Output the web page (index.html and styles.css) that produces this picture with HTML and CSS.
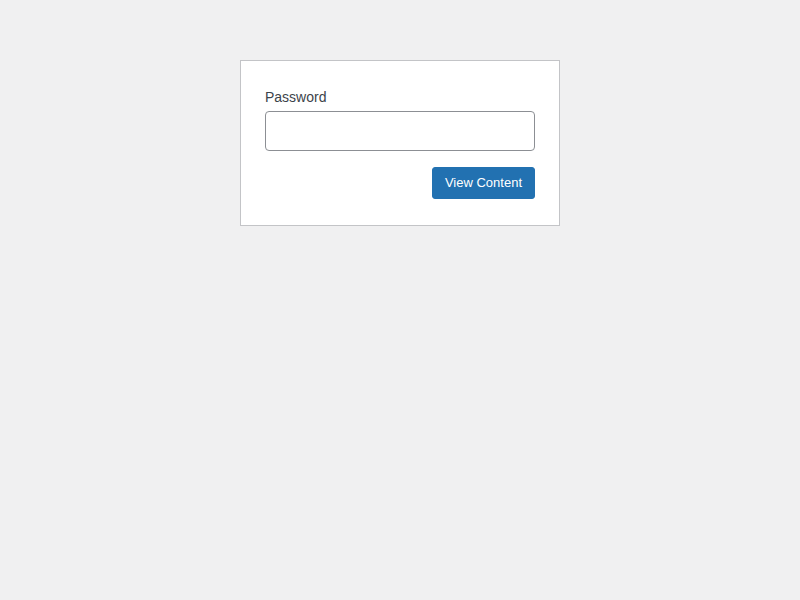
FILE: index.html
```html
<!DOCTYPE html>
<html>
<head>
<meta charset="utf-8">
<link rel="stylesheet" href="styles.css">
</head>
<body>
<div class="page">
  <form class="card">
    <label class="label" for="pwd">Password</label>
    <input class="input" id="pwd" type="password">
    <div class="actions">
      <button class="btn" type="button">View Content</button>
    </div>
  </form>
</div>
</body>
</html>
```
FILE: styles.css
```css
html, body {
  margin: 0;
  padding: 0;
  background: #f0f0f1;
  font-family: "Liberation Sans", Arial, sans-serif;
  color: #3c434a;
}
.page {
  display: flex;
  justify-content: center;
  padding-top: 60px;
}
.card {
  width: 320px;
  box-sizing: border-box;
  background: #fff;
  border: 1px solid #c3c4c7;
  padding: 26px 24px;
  display: flex;
  flex-direction: column;
  margin: 0;
}
.label {
  font-size: 14px;
  line-height: 21px;
  margin-bottom: 3px;
}
.input {
  height: 40px;
  box-sizing: border-box;
  border: 1px solid #8c8f94;
  border-radius: 4px;
  background: #fff;
  margin: 0;
  padding: 0 8px;
  font-size: 16px;
  outline: none;
}
.actions {
  display: flex;
  justify-content: flex-end;
  margin-top: 16px;
}
.btn {
  height: 32px;
  padding: 0 12px;
  background: #2271b1;
  border: 1px solid #2271b1;
  border-radius: 3px;
  color: #fff;
  font-family: "Liberation Sans", Arial, sans-serif;
  font-size: 13px;
  line-height: 30px;
  cursor: pointer;
}
```
